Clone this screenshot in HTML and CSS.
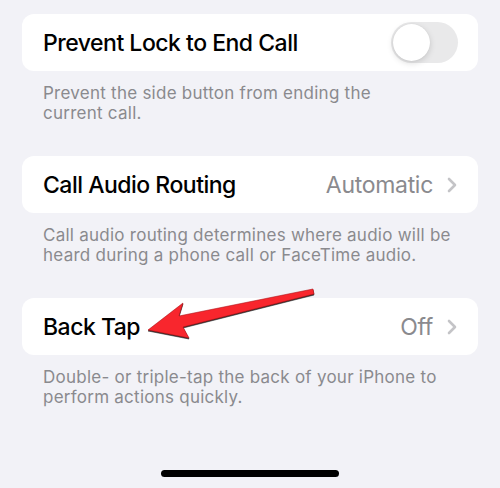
FILE: index.html
```html
<!DOCTYPE html>
<html lang="en">
<head>
    <meta charset="UTF-8">
    <meta name="viewport" content="width=device-width, initial-scale=1.0">
    <title>Accessibility - Touch</title>
    <link rel="stylesheet" href="styles.css">
</head>
<body>
    <div class="screen">
        <div class="group first">
            <div class="cell">
                <span class="cell-title">Prevent Lock to End Call</span>
                <span class="switch"><span class="knob"></span></span>
            </div>
            <p class="footer">Prevent the side button from ending the <span class="nowrap">current call.</span></p>
        </div>

        <div class="group">
            <div class="cell">
                <span class="cell-title">Call Audio Routing</span>
                <span class="cell-value">Automatic</span>
                <svg class="chevron" viewBox="0 0 10 16"><path d="M2 2l6 6-6 6"/></svg>
            </div>
            <p class="footer">Call audio routing determines where audio will be heard during a phone call or FaceTime audio.</p>
        </div>

        <div class="group">
            <div class="cell">
                <span class="cell-title">Back Tap</span>
                <span class="cell-value">Off</span>
                <svg class="chevron" viewBox="0 0 10 16"><path d="M2 2l6 6-6 6"/></svg>
            </div>
            <p class="footer">Double- or triple-tap the back of your iPhone to perform actions quickly.</p>
        </div>

        <div class="home-bar"></div>

        <!-- pointer drawn over the Back Tap row -->
        <svg class="pointer" width="500" height="488" viewBox="0 0 500 488">
            <polygon points="148,330 183,303 179,316 313,289 314,294 183,327 189,338"/>
        </svg>
    </div>
</body>
</html>
```

FILE: styles.css
```css
:root {
    --bg: #f2f2f7;
    --card: #ffffff;
    --label: #000000;
    --secondary: #8a8a8e;
    --chevron: #c4c4c7;
}

* {
    margin: 0;
    padding: 0;
    box-sizing: border-box;
}

body {
    font-family: Inter, "Noto Sans", sans-serif;
    background: var(--bg);
    color: var(--label);
    width: 500px;
    height: 488px;
    overflow: hidden;
}

.screen {
    position: relative;
    height: 488px;
    padding: 14px 22px 0;
}

.group {
    margin-bottom: 33px;
}

.cell {
    height: 57px;
    background: var(--card);
    border-radius: 12px;
    display: flex;
    align-items: center;
    padding: 0 21px;
}

.cell-title {
    flex: 1;
    font-size: 23px;
    font-weight: 500;
    letter-spacing: -0.5px;
}

.cell-value {
    font-size: 23px;
    color: var(--secondary);
    letter-spacing: -0.3px;
}

.chevron {
    width: 10px;
    height: 16px;
    margin-left: 14px;
    fill: none;
    stroke: var(--chevron);
    stroke-width: 2.6;
    stroke-linecap: round;
    stroke-linejoin: round;
}

.switch {
    width: 67px;
    height: 41px;
    border-radius: 21px;
    background: #e9e9ea;
    margin-right: -1px;
    padding: 2px;
    display: flex;
}

.knob {
    width: 37px;
    height: 37px;
    border-radius: 50%;
    background: #fff;
    box-shadow: 0 2px 6px rgba(0, 0, 0, 0.15), 0 0 1px rgba(0, 0, 0, 0.1);
}

.footer {
    margin-top: 12px;
    padding: 0 21px;
    font-size: 17px;
    line-height: 20px;
    letter-spacing: 0.25px;
    color: var(--secondary);
}

.nowrap {
    white-space: nowrap;
}

.home-bar {
    position: absolute;
    left: 161px;
    top: 470px;
    width: 178px;
    height: 7px;
    border-radius: 4px;
    background: #000;
}

.pointer {
    position: absolute;
    left: 0;
    top: 0;
    pointer-events: none;
}

.pointer polygon {
    fill: #f8262d;
    stroke: #b0141a;
    stroke-width: 0.6;
    stroke-linejoin: round;
    filter: drop-shadow(0.5px 1.5px 0.6px rgba(0, 0, 0, 0.85));
}
```
